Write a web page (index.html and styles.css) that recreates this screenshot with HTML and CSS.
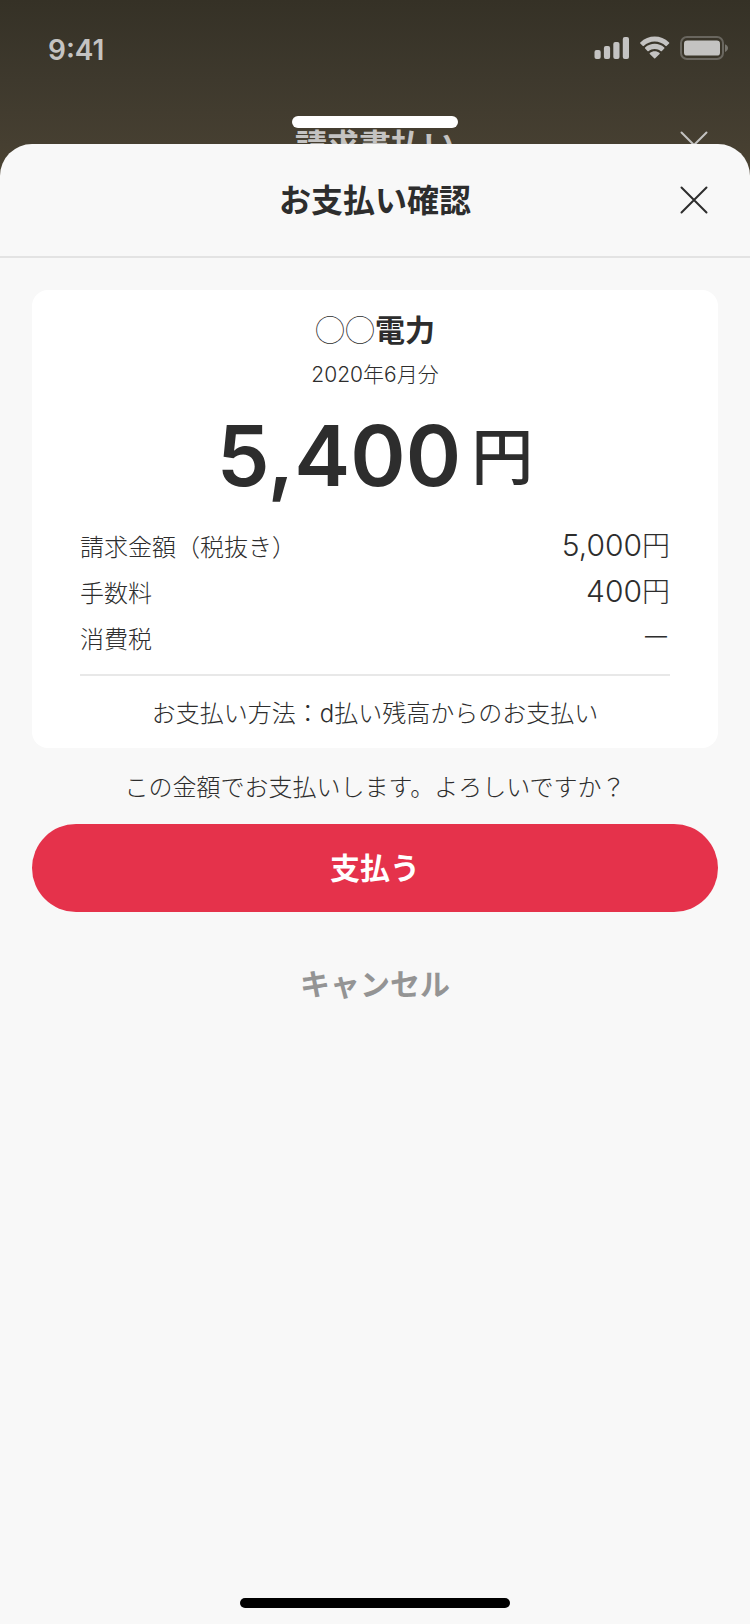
FILE: index.html
```html
<!DOCTYPE html>
<html lang="ja">
<head>
<meta charset="utf-8">
<meta name="viewport" content="width=device-width, initial-scale=1">
<title>お支払い確認</title>
<link rel="stylesheet" href="styles.css">
</head>
<body>
<div class="app">
  <div class="status-bar">
    <span class="time">9:41</span>
    <div class="status-icons">
      <svg width="36" height="24" viewBox="0 0 36 24" fill="currentColor" aria-hidden="true">
        <rect x="0.500" y="14" width="6.200" height="9" rx="2"/>
        <rect x="9.900" y="10" width="6.200" height="13" rx="2"/>
        <rect x="19.300" y="6" width="6.200" height="17" rx="2"/>
        <rect x="28.800" y="1" width="6.200" height="22" rx="2"/>
      </svg>
      <svg width="32" height="24" viewBox="0 0 32 24" fill="currentColor" aria-hidden="true">
        <path d="M15.7 5.6c4.1 0 8 1.6 11 4.4.2.2.6.2.8 0l2.6-2.6c.3-.3.3-.7 0-1C22-1.500 9.400-1.500 1.300 6.400c-.3.3-.3.7 0 1l2.600 2.600c.2.2.6.2.8 0 3-2.800 6.900-4.400 11-4.400z"/>
        <path d="M15.700 12.900c2.300 0 4.500.8 6.200 2.300.2.2.6.2.8 0l2.600-2.600c.3-.3.3-.7 0-1-5.400-5-13.800-5-19.200 0-.3.3-.3.7 0 1l2.600 2.600c.2.2.6.2.8 0 1.700-1.500 3.900-2.300 6.200-2.300z"/>
        <path d="M20.600 17.900c.3-.3.3-.7 0-1-2.800-2.300-7-2.300-9.800 0-.3.3-.3.7 0 1l4.400 4.400c.3.3.7.3 1 0z"/>
      </svg>
      <svg width="50" height="24" viewBox="0 0 50 24" fill="currentColor" aria-hidden="true">
        <rect x="1" y="1" width="42" height="22" rx="6" fill="none" stroke="currentColor" stroke-width="2" opacity=".35"/>
        <rect x="4" y="4.600" width="36" height="15" rx="3.200"/>
        <path d="M45 8.200c1.800.7 3 2.200 3 3.900s-1.200 3.200-3 3.900z" opacity=".45"/>
      </svg>
    </div>
  </div>

  <div class="title-bar title-bar-behind" aria-hidden="true">
    <span class="title">請求書払い</span>
    <span class="close">
      <svg width="28" height="28" viewBox="0 0 28 28" fill="none" stroke="currentColor" stroke-width="2" stroke-linecap="round"><path d="M1.500 1.500l25 25M26.500 1.500l-25 25"/></svg>
    </span>
  </div>

  <section class="sheet" role="dialog" aria-labelledby="sheet-title">
    <div class="grabber"></div>
    <header class="title-bar title-bar-front">
      <h1 class="title" id="sheet-title">お支払い確認</h1>
      <button class="close" type="button" aria-label="閉じる">
        <svg width="28" height="28" viewBox="0 0 28 28" fill="none" stroke="currentColor" stroke-width="2" stroke-linecap="round" aria-hidden="true"><path d="M1.500 1.500l25 25M26.500 1.500l-25 25"/></svg>
      </button>
    </header>

    <main class="content">
      <div class="card">
        <h2 class="payee"><span class="circles">◯◯</span>電力</h2>
        <p class="period">2020年6月分</p>
        <p class="amount">5,400<span class="unit">円</span></p>
        <dl class="details">
          <div class="row"><dt>請求金額（税抜き）</dt><dd>5,000<span class="yen">円</span></dd></div>
          <div class="row"><dt>手数料</dt><dd>400<span class="yen">円</span></dd></div>
          <div class="row"><dt>消費税</dt><dd><span class="yen">ー</span></dd></div>
        </dl>
        <p class="method">お支払い方法：d払い残高からのお支払い</p>
      </div>
      <p class="confirm">この金額でお支払いします。よろしいですか？</p>
      <button class="pay" type="button">支払う</button>
      <button class="cancel" type="button">キャンセル</button>
    </main>
    <div class="home-indicator"></div>
  </section>
</div>
</body>
</html>
```

FILE: styles.css
```css
* {
  box-sizing: border-box;
}

body {
  margin: 0;
  color: #2d2d2d;
  font-family: Inter, "Noto Sans CJK JP", sans-serif;
}

h1, h2, p, dl, dd {
  margin: 0;
}

button {
  padding: 0;
  border: 0;
  background: none;
  color: inherit;
  font: inherit;
  cursor: pointer;
}

svg {
  display: block;
}

.app {
  display: flex;
  flex-direction: column;
  min-height: 100vh;
  background: linear-gradient(#353126 0, #3e392d 80px, #463f31 144px, #4b4332 180px);
}

.status-bar {
  display: flex;
  align-items: center;
  justify-content: space-between;
  height: 88px;
  padding: 12px 20px 0 48px;
  color: #c4c3c2;
}

.time {
  font-size: 28px;
  font-weight: 600;
  line-height: 32px;
}

.status-icons {
  display: flex;
  gap: 9px;
  margin-bottom: 4px;
}

.title-bar {
  display: flex;
  align-items: center;
  justify-content: center;
  position: relative;
  height: 114px;
}

.title-bar-behind {
  margin-bottom: -58px;
  color: #c4c3c2;
}

.title-bar-front {
  border-bottom: 2px solid #e3e3e3;
}

.title {
  padding-top: 2px;
  font-size: 32px;
  font-weight: 700;
  line-height: 48px;
}

.close {
  position: absolute;
  right: 42px;
}

.sheet {
  display: flex;
  flex: 1;
  flex-direction: column;
  position: relative;
  border-radius: 32px 32px 0 0;
  background: #f8f8f8;
}

.grabber {
  position: absolute;
  top: -28px;
  left: 50%;
  width: 166px;
  height: 12px;
  margin-left: -83px;
  border-radius: 6px;
  background: #fff;
}

.content {
  display: flex;
  flex: 1;
  flex-direction: column;
  padding: 32px;
  text-align: center;
}

.card {
  padding: 18px 48px;
  border-radius: 16px;
  background: #fff;
}

.payee {
  font-size: 30px;
  font-weight: 700;
  line-height: 40px;
}

.circles {
  font-family: "Noto Sans CJK JP", sans-serif;
  font-weight: 100;
}

.period {
  margin-top: 10px;
  font-size: 21px;
  font-weight: 300;
  line-height: 30px;
}

.amount {
  display: flex;
  align-items: center;
  justify-content: center;
  gap: 10px;
  margin-top: 16px;
  font-size: 84px;
  font-weight: 600;
  line-height: 100px;
}

.unit {
  padding-bottom: 6px;
  font-family: "Noto Sans CJK JP", sans-serif;
  font-size: 62px;
  font-weight: 500;
  line-height: 90px;
}

.details {
  margin-top: 16px;
  padding-bottom: 14px;
  border-bottom: 2px solid #e8e8e8;
  font-weight: 300;
}

.row {
  display: flex;
  align-items: center;
  justify-content: space-between;
  height: 46px;
}

.row dt {
  font-size: 24px;
}

.row dd {
  font-size: 30px;
  line-height: 40px;
}

.yen {
  font-size: 28px;
}

.method {
  margin-top: 22px;
  font-size: 24px;
  font-weight: 300;
  line-height: 32px;
}

.confirm {
  margin: 22px 0 18px;
  font-size: 24px;
  font-weight: 300;
  line-height: 36px;
}

.pay {
  height: 88px;
  padding-bottom: 4px;
  border-radius: 44px;
  background: #e5324b;
  color: #fff;
  font-size: 30px;
  font-weight: 700;
}

.cancel {
  align-self: center;
  margin-top: 50px;
  color: #949494;
  font-size: 30px;
  font-weight: 700;
  line-height: 44px;
}

.home-indicator {
  align-self: center;
  width: 36%;
  height: 10px;
  margin-bottom: 16px;
  border-radius: 5px;
  background: #000;
}
```
